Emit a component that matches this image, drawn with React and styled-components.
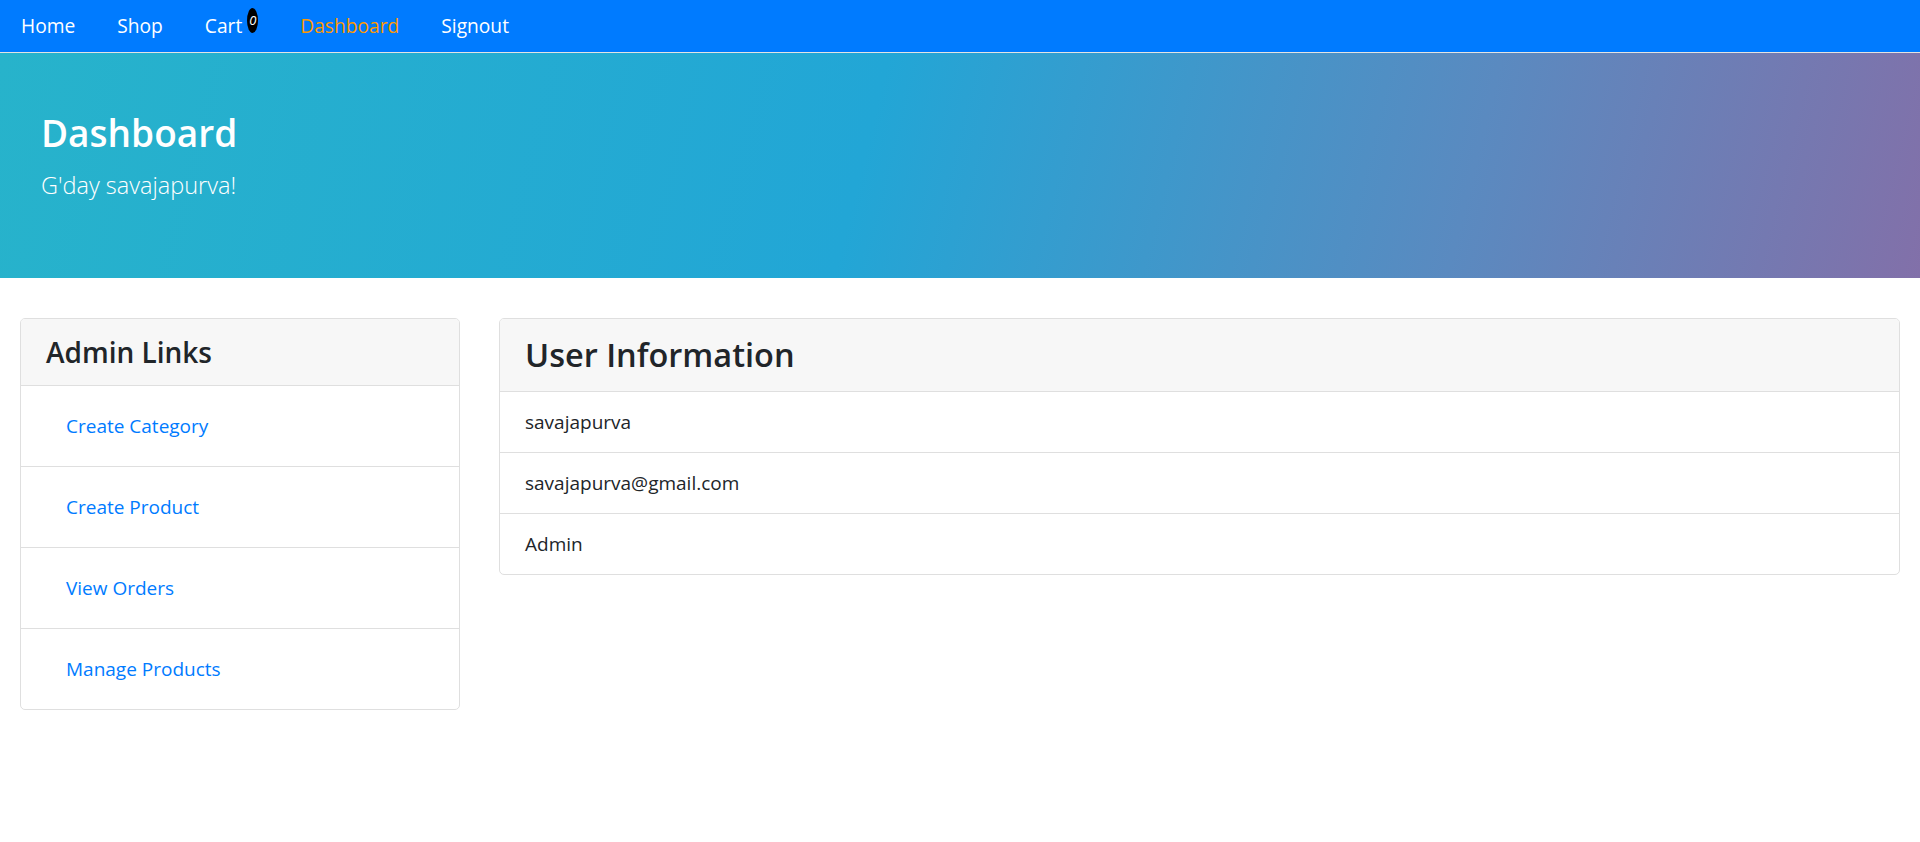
import React from 'react';
import styled, { createGlobalStyle } from 'styled-components';

const GlobalStyle = createGlobalStyle`
    body {
        margin: 0;
        font-family: 'Open Sans', 'Noto Sans', sans-serif;
        font-size: 19px;
        color: #212529;
        background: #fff;
    }
    * { box-sizing: border-box; }
`;

const NavBar = styled.nav`
    display: flex;
    align-items: center;
    height: 53px;
    background: #007bff;
    border-bottom: 1px solid #e3e3e3;
    padding: 0;
`;

const NavLink = styled.a`
    display: flex;
    align-items: center;
    padding: 0 21px;
    color: ${props => (props.active ? '#ff9900' : '#ffffff')};
    font-size: 19.2px;
    line-height: 30px;
    text-decoration: none;
`;

const Badge = styled.sup`
    display: inline-block;
    align-self: flex-start;
    margin: -3px 0 0 5px;
    width: 11px;
    height: 25px;
    border-radius: 50%;
    background: #000;
    color: #fff;
    font-size: 13px;
    font-style: italic;
    line-height: 25px;
    text-align: center;
`;

const Banner = styled.header`
    height: 225px;
    padding: 56px 41px 0;
    background: linear-gradient(104deg, #27b3cb 0%, #22a6d6 45%, #5a8ac0 76%, #8270a9 100%);
    color: #fff;
    margin-bottom: 40px;
`;

const Title = styled.h1`
    margin: 0 0 10px;
    font-size: 37px;
    font-weight: 600;
    line-height: 48px;
`;

const Lead = styled.p`
    margin: 0;
    font-size: 23.5px;
    font-weight: 300;
    line-height: 36px;
`;

const Content = styled.main`
    display: grid;
    grid-template-columns: 440px 1fr;
    gap: 39px;
    align-items: start;
    padding: 0 20px;
`;

const Card = styled.section`
    border: 1px solid #dfdfdf;
    border-radius: 5px;
    overflow: hidden;
    background: #fff;
`;

const CardHeader = styled.div`
    padding: 15px 25px;
    background: #f7f7f7;
    border-bottom: 1px solid #dfdfdf;
`;

const CardTitle = styled.h3`
    margin: 0;
    font-size: ${props => props.size}px;
    font-weight: 600;
    line-height: ${props => props.lh}px;
    color: #212529;
`;

const List = styled.ul`
    list-style: none;
    margin: 0;
    padding: 0;
`;

const Item = styled.li`
    padding: 15px 25px;
    line-height: 30px;
    font-size: 19px;
    color: #212529;
    & + & { border-top: 1px solid #dfdfdf; }
`;

const ItemLink = styled.a`
    display: block;
    padding: 10px 20px;
    color: #007bff;
    text-decoration: none;
`;

const adminLinks = ['Create Category', 'Create Product', 'View Orders', 'Manage Products'];
const userInfo = ['savajapurva', 'savajapurva@gmail.com', 'Admin'];

const App = () => (
    <React.Fragment>
        <GlobalStyle />
        <NavBar>
            <NavLink href="#">Home</NavLink>
            <NavLink href="#">Shop</NavLink>
            <NavLink href="#">
                Cart
                <Badge>0</Badge>
            </NavLink>
            <NavLink href="#" active>Dashboard</NavLink>
            <NavLink href="#">Signout</NavLink>
        </NavBar>
        <Banner>
            <Title>Dashboard</Title>
            <Lead>G'day savajapurva!</Lead>
        </Banner>
        <Content>
            <Card>
                <CardHeader>
                    <CardTitle size={28} lh={36}>Admin Links</CardTitle>
                </CardHeader>
                <List>
                    {adminLinks.map(link => (
                        <Item key={link}>
                            <ItemLink href="#">{link}</ItemLink>
                        </Item>
                    ))}
                </List>
            </Card>
            <Card>
                <CardHeader>
                    <CardTitle size={32.5} lh={42}>User Information</CardTitle>
                </CardHeader>
                <List>
                    {userInfo.map(info => (
                        <Item key={info}>{info}</Item>
                    ))}
                </List>
            </Card>
        </Content>
    </React.Fragment>
);

export default App;
